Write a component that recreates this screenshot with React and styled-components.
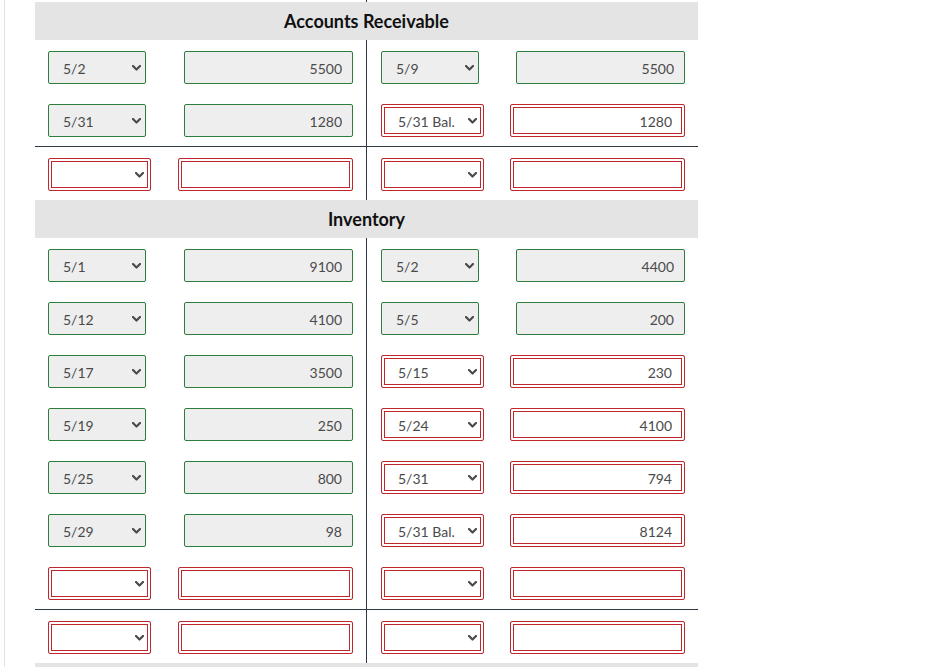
import React from "react";
import styled, { createGlobalStyle, css } from "styled-components";

const GREEN = "#2e7d3c";
const RED = "#c0272d";
const INK = "#2f3a44";

const GlobalStyle = createGlobalStyle`
  html, body { margin: 0; padding: 0; background: #fff; }
  body { font-family: Lato, "Noto Sans", sans-serif; }
`;

const Page = styled.div`
  margin-left: 4px;
  min-height: 700px;
  border-left: 1px solid #e2e2e2;
  padding-left: 30px;
`;

const Table = styled.div`
  width: 663px;
`;

const TopStub = styled.div`
  width: 331px;
  height: 2px;
  border-right: 1px solid ${INK};
`;

const Header = styled.div`
  height: 38px;
  background: #e4e4e4;
  display: flex;
  align-items: center;
  justify-content: center;
  font-weight: 700;
  font-size: 18px;
  color: #111;
`;

const Row = styled.div`
  display: flex;
  height: 53px;
  ${(p) =>
    p.$total &&
    css`
      border-top: 1px solid ${INK};
    `}
`;

const Half = styled.div`
  box-sizing: border-box;
  width: ${(p) => (p.$right ? 332 : 331)}px;
  display: flex;
  align-items: flex-start;
  justify-content: space-between;
  padding: ${(p) => (p.$right ? "11px 13px 0 14px" : "11px 13px 0")};
  ${(p) =>
    p.$right &&
    css`
      border-left: 1px solid ${INK};
    `}
`;

const fieldBase = css`
  box-sizing: border-box;
  height: 33px;
  border-radius: 2px;
  font-family: Lato, "Noto Sans", sans-serif;
  font-size: 14px;
  color: #4a4a4a;
  border: 1px solid ${(p) => (p.$bad ? RED : GREEN)};
  background: ${(p) => (p.$bad ? "#fff" : "#eeeeee")};
  ${(p) =>
    p.$bad &&
    css`
      box-shadow: inset 0 0 0 2px #fff, inset 0 0 0 3px ${RED};
    `}
`;

const SelectBox = styled.div`
  ${fieldBase};
  width: ${(p) => (p.$bad ? 103 : 98)}px;
  display: flex;
  align-items: center;
  justify-content: space-between;
  padding: ${(p) => (p.$bad ? "2px 6px 0 16px" : "1px 4px 0 14px")};
`;

const SelectText = styled.span`
  white-space: nowrap;
`;

const Chevron = styled.svg`
  width: 9px;
  height: 6px;
  flex: none;
  margin-top: -1px;
`;

const NumberField = styled.input`
  ${fieldBase};
  width: ${(p) => (p.$bad ? 175 : 169)}px;
  text-align: right;
  padding: ${(p) => (p.$bad ? "1px 12px 0 6px" : "1px 10px 0 6px")};
  outline: none;
  margin: 0;
`;

function Select({ value, bad }) {
  return (
    <SelectBox $bad={bad} role="combobox">
      <SelectText>{value}</SelectText>
      <Chevron viewBox="0 0 9 6">
        <path d="M1 1 L4.5 4.5 L8 1" fill="none" stroke="#4a4a4a" strokeWidth="2.2" strokeLinecap="round" strokeLinejoin="round" />
      </Chevron>
    </SelectBox>
  );
}

function Side({ side, right }) {
  return (
    <Half $right={right}>
      <Select value={side.d} bad={side.bad} />
      <NumberField $bad={side.bad} readOnly value={side.v} />
    </Half>
  );
}

const g = (d, v) => ({ d, v, bad: false });
const r = (d = "", v = "") => ({ d, v, bad: true });

const sections = [
  {
    title: "Accounts Receivable",
    rows: [
      [g("5/2", "5500"), g("5/9", "5500")],
      [g("5/31", "1280"), r("5/31 Bal.", "1280")],
    ],
  },
  {
    title: "Inventory",
    rows: [
      [g("5/1", "9100"), g("5/2", "4400")],
      [g("5/12", "4100"), g("5/5", "200")],
      [g("5/17", "3500"), r("5/15", "230")],
      [g("5/19", "250"), r("5/24", "4100")],
      [g("5/25", "800"), r("5/31", "794")],
      [g("5/29", "98"), r("5/31 Bal.", "8124")],
      [r(), r()],
    ],
  },
];

export default function App() {
  return (
    <>
      <GlobalStyle />
      <Page>
        <Table>
          <TopStub />
          {sections.map((s) => (
            <section key={s.title}>
              <Header>{s.title}</Header>
              {s.rows.map((row, i) => (
                <Row key={i}>
                  <Side side={row[0]} />
                  <Side side={row[1]} right />
                </Row>
              ))}
              <Row $total>
                <Side side={r()} />
                <Side side={r()} right />
              </Row>
            </section>
          ))}
          <Header />
        </Table>
      </Page>
    </>
  );
}
